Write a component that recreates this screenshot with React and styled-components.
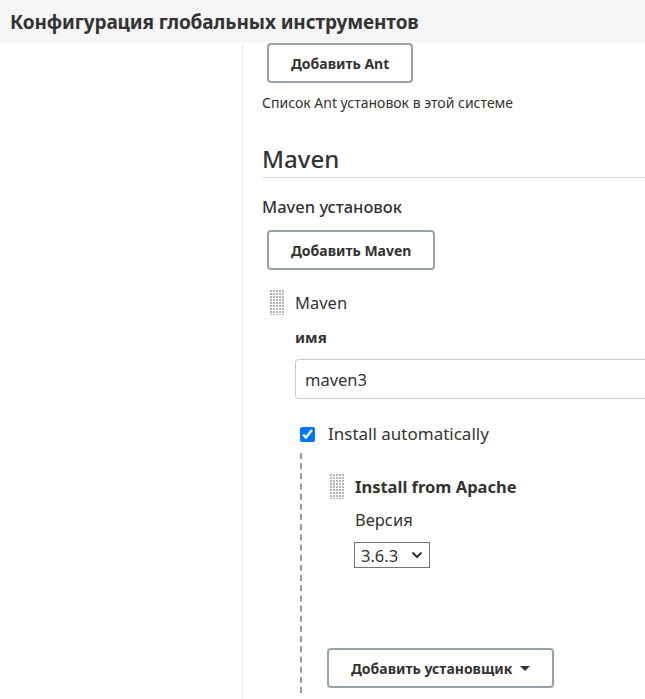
import React from 'react';
import styled, { createGlobalStyle } from 'styled-components';

const GlobalStyle = createGlobalStyle`
  html, body {
    margin: 0;
    padding: 0;
    background: #fff;
  }
  body {
    font-family: 'Noto Sans', 'Open Sans', sans-serif;
    color: #333;
    overflow: hidden;
  }
`;

const Page = styled.div`
  width: 645px;
  height: 699px;
  display: flex;
  flex-direction: column;
  overflow: hidden;
`;

const TopBar = styled.header`
  height: 43px;
  flex-shrink: 0;
  background: #f5f5f5;
  display: flex;
  align-items: center;
  padding-left: 10px;

  & h1 {
    margin: 0;
    font-size: 19px;
    font-weight: 700;
    color: #333;
    letter-spacing: -0.1px;
  }
`;

const Body = styled.div`
  flex: 1;
  display: flex;
  min-height: 0;
`;

const Sidebar = styled.aside`
  width: 242px;
  flex-shrink: 0;
  border-right: 1px solid #e6edef;
`;

const Main = styled.main`
  flex: 1;
  padding-left: 19px;
  min-width: 0;
`;

const Button = styled.button`
  display: inline-flex;
  align-items: center;
  gap: 8px;
  height: 40px;
  box-sizing: border-box;
  padding: 0 22px;
  background: #fff;
  border: 2px solid #98a2a9;
  border-radius: 4px;
  font-family: inherit;
  font-size: 14px;
  font-weight: 700;
  color: #333;
  margin-left: ${p => p.$indent ?? 5}px;
`;

const Caret = styled.span`
  width: 0;
  height: 0;
  border-left: 5px solid transparent;
  border-right: 5px solid transparent;
  border-top: 5px solid #333;
`;

const Help = styled.p`
  margin: 10px 0 0;
  font-size: 14px;
  color: #333;
`;

const SectionTitle = styled.h2`
  margin: 31px 0 0;
  font-size: 24px;
  font-weight: 500;
  color: #333;
  line-height: 32px;
  padding-bottom: 2px;
  border-bottom: 1px solid #ddd;
`;

const SubTitle = styled.h3`
  margin: 17px 0 11px;
  font-size: 16.5px;
  font-weight: 500;
  line-height: 24px;
`;

const Repeated = styled.div`
  margin-top: 20px;
  padding-left: 8px;
`;

const ItemHead = styled.div`
  display: flex;
  align-items: center;
  gap: 10px;
  font-size: 16.5px;
  font-weight: ${p => (p.$bold ? 700 : 400)};
  line-height: 24px;
`;

const Handle = styled.span`
  width: 15px;
  height: 25px;
  flex-shrink: 0;
  background-image: radial-gradient(circle at 1px 1px, #b5b5b5 0.9px, transparent 1.1px);
  background-size: 3px 3px;
`;

const ItemBody = styled.div`
  padding-left: 25px;
`;

const FieldLabel = styled.div`
  margin-top: ${p => p.$gap || 10}px;
  padding-left: ${p => p.$indent || 0}px;
  font-size: ${p => (p.$bold ? '15px' : '16.5px')};
  font-weight: ${p => (p.$bold ? 700 : 400)};
  line-height: 24px;
`;

const TextInput = styled.input`
  display: block;
  box-sizing: border-box;
  margin-top: 10px;
  width: 360px;
  height: 40px;
  border: 1px solid #ccc;
  border-right: none;
  border-radius: 4px 0 0 4px;
  padding: 0 9px;
  font-family: inherit;
  font-size: 16.5px;
  color: #333;
  outline: none;
`;

const CheckRow = styled.label`
  display: flex;
  align-items: center;
  gap: 13px;
  margin-top: 23px;
  margin-left: 5px;
  font-size: 17px;
  line-height: 24px;

  & input {
    margin: 0;
    width: 15px;
    height: 15px;
    accent-color: #0075ff;
  }
`;

const Nested = styled.div`
  margin-top: 7px;
  margin-left: 5px;
  border-left: 2px dashed #999;
  padding-left: 28px;
  padding-top: 21px;
  height: 240px;
  box-sizing: border-box;
`;

const Select = styled.div`
  margin-top: 10px;
  margin-left: 24px;
  width: 76px;
  height: 26px;
  box-sizing: border-box;
  border: 1px solid #767676;
  display: flex;
  align-items: center;
  justify-content: space-between;
  padding: 0 6px 0 6px;
  font-size: 16.5px;
  color: #333;
`;

const Chevron = () => (
  <svg width="12" height="8" viewBox="0 0 12 8">
    <path d="M1.5 1.5 L6 6 L10.5 1.5" fill="none" stroke="#333" strokeWidth="2" />
  </svg>
);

const NestedFooter = styled.div`
  margin-top: 80px;
`;

export default function App() {
  return (
    <Page>
      <GlobalStyle />
      <TopBar>
        <h1>Конфигурация глобальных инструментов</h1>
      </TopBar>
      <Body>
        <Sidebar />
        <Main>
          <Button>Добавить Ant</Button>
          <Help>Список Ant установок в этой системе</Help>

          <SectionTitle>Maven</SectionTitle>
          <SubTitle>Maven установок</SubTitle>
          <Button>Добавить Maven</Button>

          <Repeated>
            <ItemHead>
              <Handle />
              Maven
            </ItemHead>
            <ItemBody>
              <FieldLabel $bold $gap={10}>имя</FieldLabel>
              <TextInput defaultValue="maven3" />
              <CheckRow>
                <input type="checkbox" defaultChecked readOnly />
                Install automatically
              </CheckRow>
              <Nested>
                <ItemHead $bold>
                  <Handle />
                  Install from Apache
                </ItemHead>
                <FieldLabel $gap={9} $indent={25}>Версия</FieldLabel>
                <Select>
                  3.6.3
                  <Chevron />
                </Select>
                <NestedFooter>
                  <Button $indent={-3}>
                    Добавить установщик
                    <Caret />
                  </Button>
                </NestedFooter>
              </Nested>
            </ItemBody>
          </Repeated>
        </Main>
      </Body>
    </Page>
  );
}
